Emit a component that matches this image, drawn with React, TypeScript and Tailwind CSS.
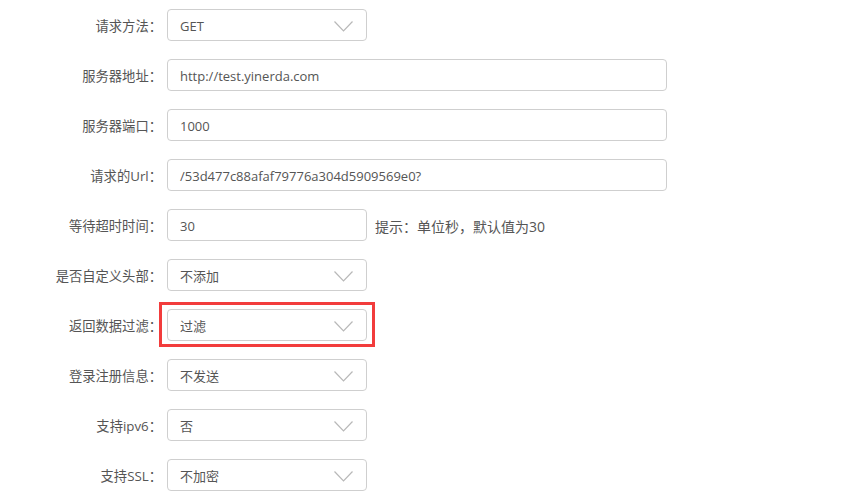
const font = { fontFamily: '"Open Sans", "Noto Sans CJK SC", sans-serif' };

type Field = {
  label: string;
  value: string;
  kind: "select" | "input";
  hint?: string;
  marked?: boolean;
};

const fields: Field[] = [
  { label: "请求方法：", value: "GET", kind: "select" },
  { label: "服务器地址：", value: "http://test.yinerda.com", kind: "input" },
  { label: "服务器端口：", value: "1000", kind: "input" },
  { label: "请求的Url：", value: "/53d477c88afaf79776a304d5909569e0?", kind: "input" },
  { label: "等待超时时间：", value: "30", kind: "select", hint: "提示：单位秒，默认值为30" },
  { label: "是否自定义头部：", value: "不添加", kind: "select" },
  { label: "返回数据过滤：", value: "过滤", kind: "select", marked: true },
  { label: "登录注册信息：", value: "不发送", kind: "select" },
  { label: "支持ipv6：", value: "否", kind: "select" },
  { label: "支持SSL：", value: "不加密", kind: "select" },
];

function Chevron() {
  return (
    <svg width="19" height="11" viewBox="0 0 19 11" className="mt-[3px] shrink-0">
      <path d="M0.5 0.5 L9.5 10 L18.5 0.5" fill="none" stroke="#b8b8b8" strokeWidth="1.2" />
    </svg>
  );
}

function Row({ f }: { f: Field }) {
  // the timeout field is a plain short input, so no chevron
  const isShortInput = f.hint !== undefined;
  const wide = f.kind === "input";
  return (
    <div className="flex h-8 items-center">
      <div className="w-[162px] shrink-0 pt-[3px] text-right text-[13.3px] text-[#555]">{f.label}</div>
      <div className="relative ml-[5px]">
        <div
          className={`flex h-8 items-center justify-between rounded-[4px] border border-[#cfcfcf] bg-white pl-3 pr-[13px] text-[13px] text-[#555] ${
            wide ? "w-[500px]" : "w-[200px]"
          }`}
        >
          <span className="pt-[3px]">{f.value}</span>
          {f.kind === "select" && !isShortInput && <Chevron />}
        </div>
        {f.marked && (
          <div className="pointer-events-none absolute -top-[7px] -bottom-[6px] -left-[8px] -right-[8px] border-[3px] border-[#f23c3c]" />
        )}
      </div>
      {f.hint && <div className="ml-[8px] pt-[3px] text-[14px] text-[#555]">{f.hint}</div>}
    </div>
  );
}

export default function App() {
  return (
    <div className="h-[496px] w-[858px] overflow-hidden bg-white pt-[9px]" style={font}>
      <div className="flex flex-col gap-[18px]">
        {fields.map((f) => (
          <Row key={f.label} f={f} />
        ))}
      </div>
    </div>
  );
}
